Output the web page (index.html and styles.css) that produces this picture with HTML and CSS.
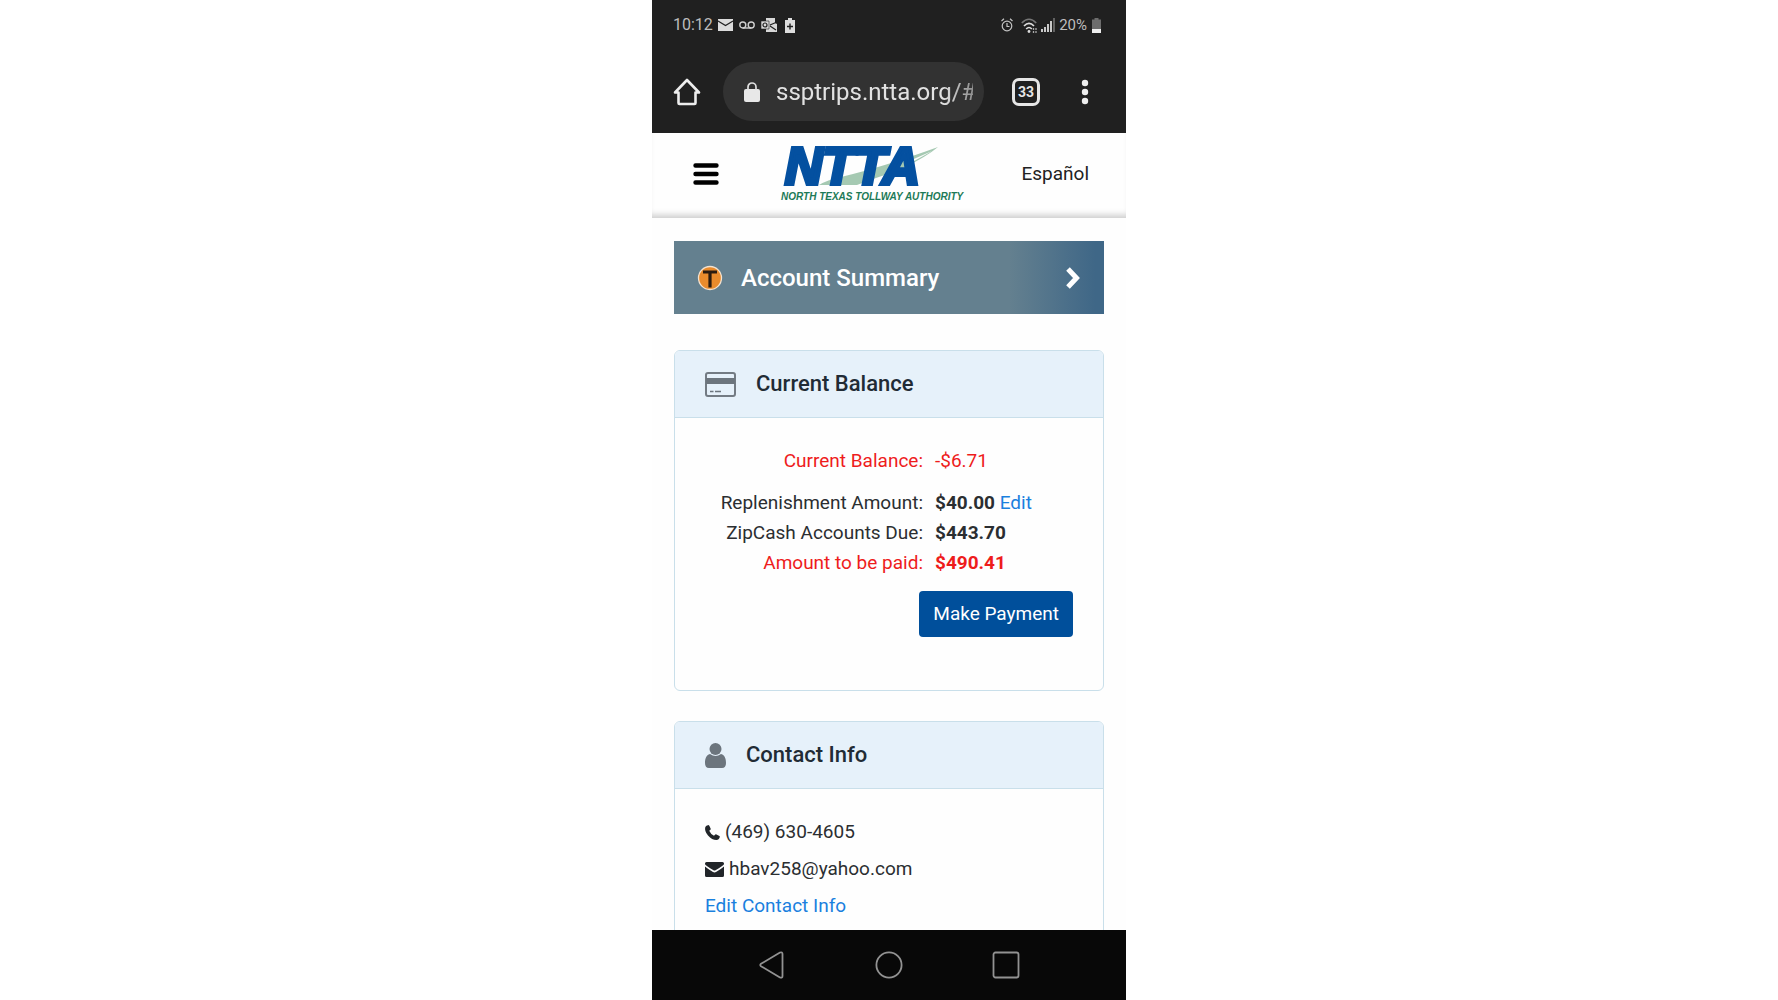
FILE: index.html
```html
<!DOCTYPE html>
<html lang="en">
<head>
<meta charset="utf-8">
<meta name="viewport" content="width=device-width, initial-scale=1">
<title>NTTA Account</title>
<link rel="stylesheet" href="styles.css">
</head>
<body>
<div class="phone">
  <div class="status">
    <span class="time">10:12</span>
    <svg class="ico" width="15" height="12" viewBox="0 0 15 12"><path fill="#dcdcdc" d="M0 0h15v12H0z"/><path fill="none" stroke="#202020" stroke-width="1.2" d="M0 2l7.5 4.500L15 2"/></svg>
    <svg class="ico voicemail" width="16" height="8" viewBox="0 0 16 8"><g fill="none" stroke="#d0d0d0" stroke-width="1.400"><circle cx="3.800" cy="4" r="3"/><circle cx="12.200" cy="4" r="3"/><path d="M3.800 7h8.400"/></g></svg>
    <svg class="ico outlook" width="16" height="14" viewBox="0 0 16 14"><path fill="#d8d8d8" d="M5 0h9v5l2 1v8H5z"/><path fill="none" stroke="#202020" stroke-width="1.200" d="M9 7l7-3M9 8l6 4"/><path fill="#d8d8d8" stroke="#202020" stroke-width=".6" d="M0 3h8v8H0z"/><circle cx="4" cy="7" r="2" fill="none" stroke="#202020" stroke-width="1.200"/></svg>
    <svg class="ico charge" width="10" height="15" viewBox="0 0 10 15"><path fill="#dedede" d="M3 0h4v2h3v13H0V2h3z"/><path stroke="#202020" stroke-width="1.400" d="M2 8.500h6M5 5.500v6"/></svg>
    <span class="grow"></span>
    <svg class="ico alarm" width="12" height="14" viewBox="0 0 12 14"><g fill="none" stroke="#c4c4c4" stroke-width="1.200"><circle cx="6" cy="8" r="4.800"/><path d="M6 5v3.500h2.500M.5 3L3 .8M11.500 3L9 .8"/></g></svg>
    <svg class="ico wifi" width="16" height="15" viewBox="0 0 16 15"><g fill="none" stroke-width="1.700"><path stroke="#777" d="M.8 5Q8-2.500 15.200 5"/><path stroke="#ddd" d="M3 8Q8 2.800 13 8M5.200 11Q8 8 10.800 11"/></g><circle cx="8" cy="13.500" r="1.400" fill="#ddd"/><path stroke="#aaa" stroke-width="1.300" d="M12.500 10v2M12.500 13v2M15 10v2M15 13v2"/></svg>
    <svg class="ico signal" width="14" height="14" viewBox="0 0 14 14"><path stroke="#d2d2d2" stroke-width="1.900" d="M1 14v-3M4 14V9M7 14V6M10 14V3"/><path stroke="#777" stroke-width="1.500" d="M13 14V0"/></svg>
    <span class="percent">20%</span>
    <svg class="ico" width="9" height="15" viewBox="0 0 9 15"><path fill="#6d6d6d" d="M2.500 0h4v1.500H9V15H0V1.500h2.500z"/><path fill="#eee" d="M0 11h9v4H0z"/></svg>
  </div>
  <div class="browser">
    <button class="plain" aria-label="Home"><svg width="28" height="28" viewBox="0 0 28 28"><path fill="none" stroke="#ededed" stroke-width="2.600" stroke-linejoin="round" stroke-linecap="round" d="M2 14.500L14 2l12 12.500h-3.500V25q0 1-1 1h-15q-1 0-1-1V14.500z"/></svg></button>
    <label class="address">
      <svg width="16" height="20" viewBox="0 0 16 20"><rect y="7" width="16" height="13" rx="2" fill="#e8e8e8"/><path fill="none" stroke="#e0e0e0" stroke-width="1.700" d="M4 8V5a4 4 0 018 0v3"/></svg>
      <input class="url" type="text" value="ssptrips.ntta.org/#" aria-label="Address">
    </label>
    <button class="tabs" aria-label="Open tabs">33</button>
    <button class="plain" aria-label="Menu"><svg width="8" height="26" viewBox="0 0 8 26"><g fill="#eee"><circle cx="4" cy="4" r="3.200"/><circle cx="4" cy="13" r="3.200"/><circle cx="4" cy="22" r="3.200"/></g></svg></button>
  </div>
  <header class="site">
    <button class="plain" aria-label="Navigation"><svg width="26" height="22" viewBox="0 0 26 22"><path stroke="#000" stroke-width="4.400" stroke-linecap="round" d="M2.500 2.500h21M2.500 11h21M2.500 19.500h21"/></svg></button>
    <a class="logo" href="#" aria-label="NTTA home"><svg width="184" height="58" viewBox="0 0 184 58">
      <path fill="#a5c9b2" d="M38 40Q46 35 60 32Q102 22 157 2Q145 12 124 22L116 26Q94 33 76 40z"/>
      <path fill="#fdfdfd" d="M126 17L151 6L126 20z"/>
      <text class="logo-name" x="4" y="39">NTTA</text>
      <text class="logo-tag" x="0" y="55">NORTH TEXAS TOLLWAY AUTHORITY</text>
    </svg></a>
    <a class="language" href="#">Español</a>
  </header>
  <main class="content">
    <a class="banner" href="#">
      <svg width="26" height="26" viewBox="0 0 26 26"><circle cx="13" cy="13" r="11.500" fill="#e98b2c" stroke="#f4e2cf" stroke-width="1.300"/><path stroke="#2a1b10" stroke-width="3.200" d="M6 7h14M13 7v15.500"/></svg>
      <span class="banner-title">Account Summary</span>
      <svg width="16" height="24" viewBox="0 0 16 24"><path fill="none" stroke="#fff" stroke-width="5" d="M3 3l8.500 9L3 21"/></svg>
    </a>
    <section class="card balance">
      <div class="card-head">
        <svg width="31" height="25" viewBox="0 0 31 25"><rect x="1" y="1" width="29" height="23" rx="2" fill="none" stroke="#737b83" stroke-width="2"/><path fill="#6c757d" d="M1 6h29v6H1z"/><path stroke="#6c757d" stroke-width="1.600" d="M5 19.500h3.500M10 19.500h6"/></svg>
        <h2>Current Balance</h2>
      </div>
      <div class="card-body">
        <dl class="amounts">
          <dt class="due first">Current Balance:</dt><dd class="due first light">-$6.71</dd>
          <dt>Replenishment Amount:</dt><dd>$40.00 <a href="#">Edit</a></dd>
          <dt>ZipCash Accounts Due:</dt><dd>$443.70</dd>
          <dt class="due">Amount to be paid:</dt><dd class="due">$490.41</dd>
        </dl>
        <button class="pay">Make Payment</button>
      </div>
    </section>
    <section class="card">
      <div class="card-head">
        <svg width="21" height="25" viewBox="0 0 21 25"><g fill="#6c757d"><circle cx="10.500" cy="6" r="6"/><path d="M5 11q5.500 4 11 0c4 1 5 5 5 9q0 5-4 5H4q-4 0-4-5c0-4 1-8 5-9z"/></g></svg>
        <h2>Contact Info</h2>
      </div>
      <div class="card-body contact">
        <p><svg width="15" height="15" viewBox="0 0 15 15"><path fill="#212529" d="M.3 2Q1 .5 3.500 0Q4.200 0 4.700 1.500L5.800 4Q5.500 5 4.200 5.800Q5.500 9 9 10.800Q10.200 9 11 9.200L14.400 11Q15 11.300 14.800 12Q14 15 11.500 15Q7 15 3 10.500Q-.8 6 .3 2z"/></svg>(469) 630-4605</p>
        <p><svg width="19" height="15" viewBox="0 0 19 15"><path fill="#212529" d="M1.500 0h16Q19 0 19 1.500v.8Q18 4 10.500 8.200Q9.500 8.800 8.500 8.200Q1 4 0 2.300V1.500Q0 0 1.500 0zM0 4.600Q3 7.300 8 10Q9.500 10.800 11 10Q16 7.300 19 4.600V13.500Q19 15 17.500 15h-16Q0 15 0 13.500z"/></svg>hbav258@yahoo.com</p>
        <p><a href="#">Edit Contact Info</a></p>
      </div>
    </section>
  </main>
  <nav class="system">
    <button class="plain" aria-label="Back"><svg width="28" height="28" viewBox="0 0 28 28"><path fill="none" stroke="#929292" stroke-width="1.800" stroke-linejoin="round" d="M3 12.800L22 1.500q2.500-.8 2.500 1.500v22q0 2.300-2.500 1.500L3 15.200q-1.500-1.200 0-2.400z"/></svg></button>
    <button class="plain" aria-label="Home screen"><svg width="28" height="28" viewBox="0 0 28 28"><circle cx="14" cy="14" r="12.600" fill="none" stroke="#929292" stroke-width="1.800"/></svg></button>
    <button class="plain" aria-label="Recent apps"><svg width="28" height="28" viewBox="0 0 28 28"><rect x="1.500" y="1.500" width="25" height="25" rx="2" fill="none" stroke="#929292" stroke-width="1.800"/></svg></button>
  </nav>
</div>
</body>
</html>
```
FILE: styles.css
```css
* { box-sizing: border-box; }
body {
  margin: 0;
  background: #fff;
  color: #2b2e31;
  font: 19px/30px Roboto, "Liberation Sans", sans-serif;
}
svg { display: block; flex: none; overflow: visible; }
a { color: #1a80de; text-decoration: none; }
button { font: inherit; cursor: pointer; }
.plain { padding: 0; border: 0; background: none; }
.phone {
  display: flex;
  flex-direction: column;
  width: 100%;
  max-width: 474px;
  height: 100vh;
  margin: 0 auto;
  overflow: hidden;
  background: #fefefe;
}
.status {
  display: flex;
  flex: none;
  align-items: center;
  height: 50px;
  padding: 0 25px 0 21px;
  background: #202020;
  color: #bdbdbd;
  font-size: 16px;
}
.time { margin-right: 5px; }
.voicemail, .outlook { margin-left: 6px; }
.charge { margin-left: 8px; }
.grow { flex: 1; }
.wifi { margin-left: 8px; }
.signal { margin: 0 4px; }
.percent { margin-right: 5px; font-size: 15px; }
.browser {
  display: flex;
  flex: none;
  align-items: center;
  height: 83px;
  padding: 0 37px 0 21px;
  background: #202020;
}
.address {
  display: flex;
  flex: 1;
  align-items: center;
  gap: 16px;
  min-width: 0;
  height: 59px;
  margin: 0 28px 0 22px;
  padding: 0 11px 0 21px;
  border-radius: 30px;
  background: #323232;
}
.url {
  flex: 1;
  min-width: 0;
  padding: 0;
  border: 0;
  outline: 0;
  background: none;
  color: #e2e2e2;
  font: 24px/30px Roboto, sans-serif;
  mask-image: linear-gradient(to right, #000 85%, #0008 100%);
}
.tabs {
  width: 28px;
  height: 28px;
  margin-right: 41px;
  padding: 0;
  border: 3px solid #e6e6e6;
  border-radius: 7px;
  background: none;
  color: #e6e6e6;
  font-size: 14px;
  font-weight: 700;
  line-height: 20px;
}
.site {
  display: flex;
  flex: none;
  align-items: center;
  justify-content: space-between;
  height: 85px;
  padding: 0 37px 4px 41px;
  background: #fefefe;
  box-shadow: inset 0 -7px 6px -4px #ccc;
}
.logo { margin-left: 5px; }
.logo-name {
  fill: #0450a0;
  stroke: #0450a0;
  stroke-width: 4;
  font: italic 700 52px "Liberation Sans", sans-serif;
}
.logo-tag {
  fill: #1c7a57;
  font: italic 700 10px "Liberation Sans", sans-serif;
}
.language { color: #222; }
.content {
  flex: 1;
  min-height: 0;
  padding: 23px 22px 0;
  overflow: hidden;
}
.banner {
  display: flex;
  align-items: center;
  height: 73px;
  padding: 0 23px;
  background: linear-gradient(to right, #64808f 78%, #3f6787 98%);
  color: #fff;
}
.banner-title {
  flex: 1;
  margin-left: 18px;
  font-size: 24px;
  font-weight: 500;
}
.card {
  margin-top: 30px;
  border: 1px solid #c9dfea;
  border-radius: 6px;
  overflow: hidden;
}
.balance { min-height: 341px; margin-top: 36px; }
.card-head {
  display: flex;
  align-items: center;
  gap: 20px;
  height: 67px;
  padding: 0 30px;
  border-bottom: 1px solid #c9dfea;
  background: #e6f1fa;
}
h2 {
  margin: 0;
  color: #212b35;
  font-size: 22px;
  font-weight: 500;
}
.card-body { padding: 28px 30px; }
.amounts {
  display: grid;
  grid-template-columns: 218px 1fr;
  column-gap: 12px;
  margin: 0;
}
dt { text-align: right; }
dd { margin: 0; font-weight: 700; }
.amounts .first { margin-bottom: 12px; }
.amounts .light { font-weight: 400; }
.due { color: #ee1c1c; }
dd a { font-weight: 400; }
.pay {
  display: block;
  height: 46px;
  margin: 13px 0 0 auto;
  padding: 0 14px;
  border: 0;
  border-radius: 4px;
  background: #004f9b;
  color: #fff;
}
.contact p {
  display: flex;
  align-items: center;
  gap: 5px;
  margin: 0 0 7px;
}
.system {
  display: flex;
  flex: none;
  align-items: center;
  justify-content: space-between;
  height: 70px;
  padding: 0 106px;
  background: #080808;
}
```
